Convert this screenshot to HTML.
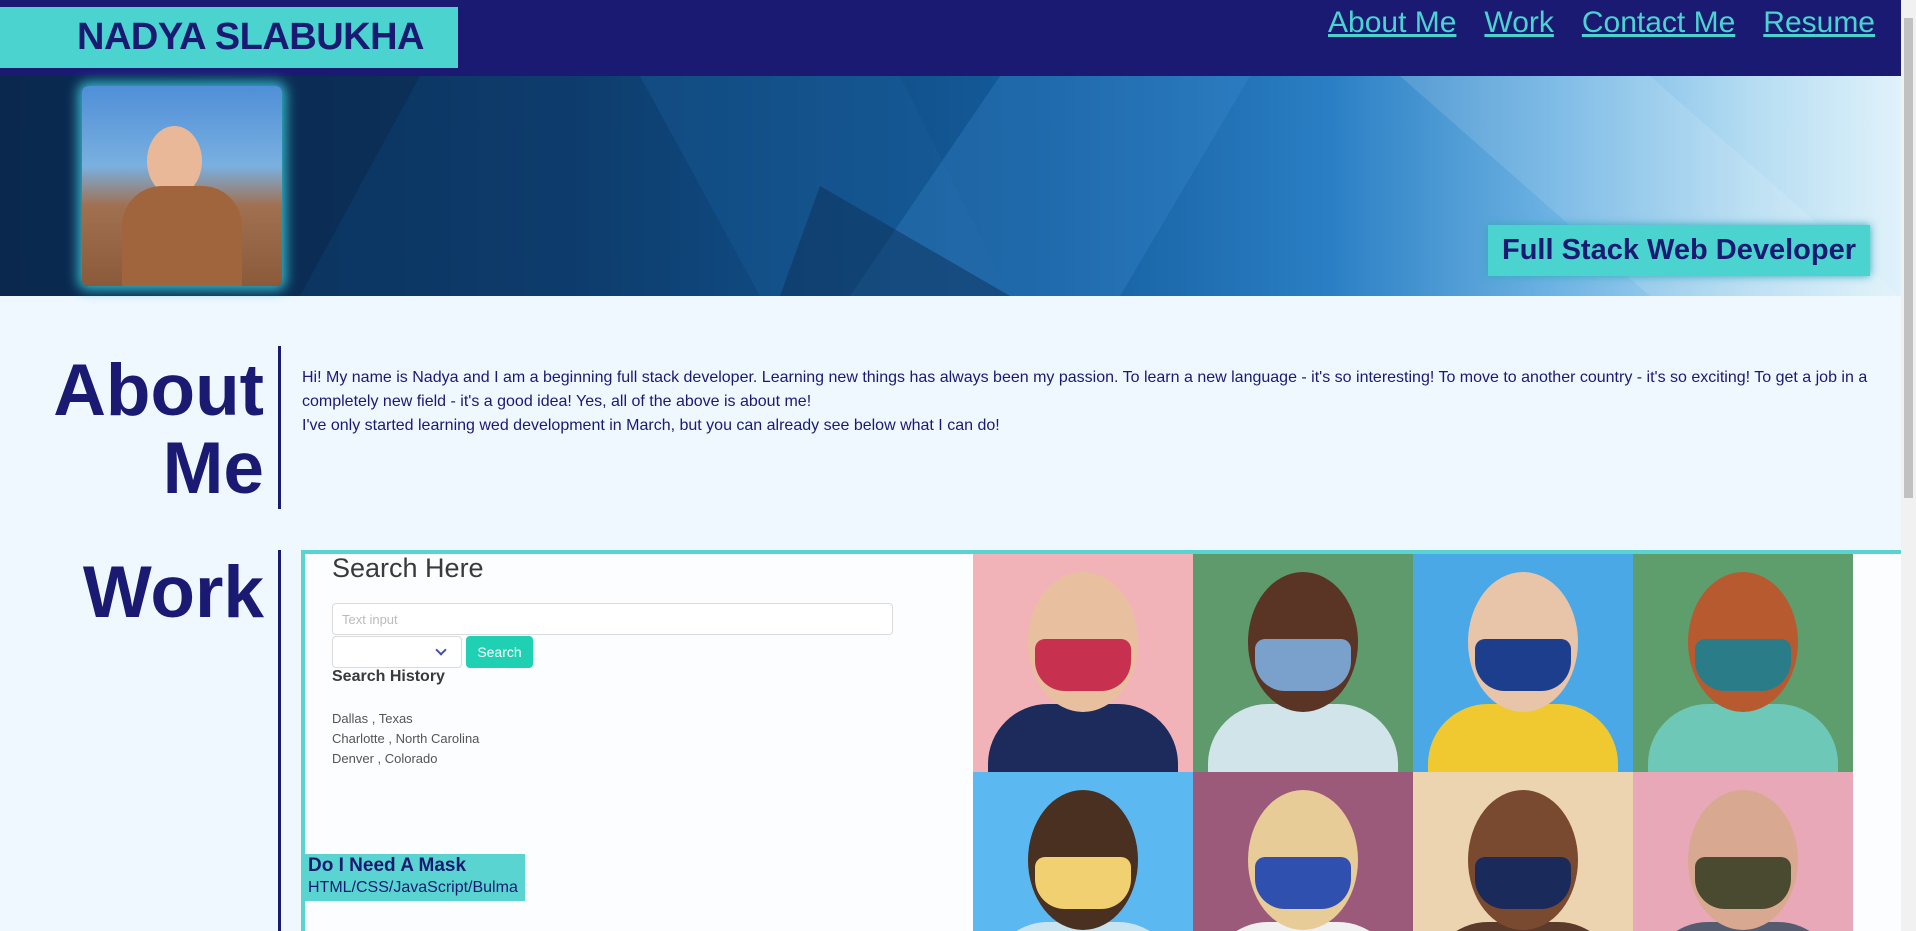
<!DOCTYPE html>
<html><head><meta charset="utf-8"><style>
*{margin:0;padding:0;box-sizing:border-box}
html,body{width:1916px;height:931px;overflow:hidden}
body{background:#eff7ff;font-family:"Liberation Sans",sans-serif;position:relative}
.sb{position:absolute;left:1901px;top:0;width:15px;height:931px;background:#f1f1f1}
.sb:before{content:"";position:absolute;left:3px;top:18px;width:9px;height:480px;background:#c1c1c1}
header{position:absolute;left:0;top:0;width:1901px;height:76px;background:#1b1a73}
.name{position:absolute;left:0;top:7px;width:458px;height:61px;background:#4ad3cf;color:#1b1a73;font-weight:bold;font-size:38px;line-height:61px;padding-left:77px;letter-spacing:-0.5px}
nav{position:absolute;right:26px;top:6px;font-size:30px}
nav a{color:#4ad3cf;text-decoration:underline;margin-left:28px}
.banner{position:absolute;left:0;top:76px;width:1901px;height:220px;overflow:hidden}
.photo{position:absolute;left:82px;top:86px;width:200px;height:200px;border-radius:6px;overflow:hidden;box-shadow:0 0 12px 4px #35b8c8;background:linear-gradient(#4f8fd8 0,#7ab0e0 40%,#a07050 60%,#8a5a3a 100%)}
.fs{position:absolute;left:1488px;top:225px;width:382px;height:51px;background:#4ad3cf;color:#1b1a73;font-weight:bold;font-size:29px;line-height:51px;text-align:center;box-shadow:0 0 8px #3ab}
h2{position:absolute;color:#1b1a73;font-size:73px;font-weight:bold;text-align:right;line-height:78px}
.vl{position:absolute;left:278px;width:3px;background:#1b1a73}
.about p{position:absolute;left:302px;top:366px;width:1570px;font-size:16px;line-height:24px;color:#1b1a73}
.work{position:absolute;left:301px;top:550px;width:1600px;height:381px;border:4px solid #5ad4d0;border-right:none;border-bottom:none;background:#fcfdff}
.sh{position:absolute;left:332px;top:553px;font-size:27px;color:#3a3a3a}
.inp{position:absolute;left:332px;top:603px;width:561px;height:32px;border:1px solid #dbdbdb;border-radius:4px;background:#fff;font-size:13px;color:#bbb;padding:8px 9px}
.sel{position:absolute;left:332px;top:636px;width:130px;height:32px;border:1px solid #dbdbdb;border-radius:4px;background:#fff}
.sel:after{content:"";position:absolute;right:16px;top:9px;width:6px;height:6px;border-right:2px solid #4850a8;border-bottom:2px solid #4850a8;transform:rotate(45deg)}
.btn{position:absolute;left:466px;top:636px;width:67px;height:32px;background:#1fd1b2;color:#fff;border-radius:4px;font-size:14px;text-align:center;line-height:32px}
.hist{position:absolute;left:332px;top:668px;font-size:16px;font-weight:bold;color:#3a3a3a}
.cities{position:absolute;left:332px;top:709px;font-size:13px;line-height:20px;color:#555}
.mask{position:absolute;left:304px;top:854px;width:221px;height:47px;background:#5ad4d0;color:#1b1a73;padding-left:4px}
.mask b{display:block;font-size:19px;line-height:24px}
.mask span{font-size:16px;line-height:20px}
.grid{position:absolute;left:973px;top:554px;width:880px;height:377px;overflow:hidden}
.t{position:absolute;width:220px;height:218px;overflow:hidden}
.t .h{position:absolute;left:55px;top:18px;width:110px;height:140px;border-radius:50%}
.t .m{position:absolute;left:62px;top:85px;width:96px;height:52px;border-radius:10px 10px 30px 30px}
.t .b{position:absolute;left:15px;top:150px;width:190px;height:120px;border-radius:60px 60px 0 0}
</style></head><body>
<header><div class="name">NADYA SLABUKHA</div>
<nav><a>About Me</a><a>Work</a><a>Contact Me</a><a>Resume</a></nav></header>
<div class="banner"><svg width="1901" height="220" viewBox="0 0 1901 220">
<defs><linearGradient id="g" x1="0" x2="1"><stop offset="0" stop-color="#0b2c55"/><stop offset=".3" stop-color="#0d3c6c"/><stop offset=".55" stop-color="#145c9c"/><stop offset=".7" stop-color="#2a7fc4"/><stop offset=".82" stop-color="#6fb4e4"/><stop offset=".92" stop-color="#b4dcf2"/><stop offset="1" stop-color="#e0f2fa"/></linearGradient></defs>
<rect width="1901" height="220" fill="url(#g)"/>
<polygon points="640,0 900,0 1010,220 760,220" fill="#1a5f9a" opacity=".35"/>
<polygon points="1000,0 1250,0 1120,220 850,220" fill="#3a8ad0" opacity=".3"/>
<polygon points="0,0 420,0 300,220 0,220" fill="#0a2444" opacity=".4"/>
<polygon points="1400,0 1650,0 1900,220 1650,220" fill="#ffffff" opacity=".12"/>
<polygon points="820,110 1010,220 780,220" fill="#0b2f58" opacity=".5"/>
</svg></div>
<div class="photo"><div style="position:absolute;left:65px;top:40px;width:55px;height:70px;border-radius:50%;background:#e8b898"></div><div style="position:absolute;left:40px;top:100px;width:120px;height:100px;border-radius:40px 40px 0 0;background:#a0653c"></div></div>
<div class="fs">Full Stack Web Developer</div>
<div class="about"><h2 style="left:40px;top:352px;width:224px">About<br>Me</h2>
<div class="vl" style="top:346px;height:163px"></div>
<p>Hi! My name is Nadya and I am a beginning full stack developer. Learning new things has always been my passion. To learn a new language - it's so interesting! To move to another country - it's so exciting! To get a job in a completely new field - it's a good idea! Yes, all of the above is about me!<br>I've only started learning wed development in March, but you can already see below what I can do!</p></div>
<h2 style="left:40px;top:554px;width:224px">Work</h2>
<div class="vl" style="top:550px;height:381px"></div>
<div class="work"></div>
<div class="sh">Search Here</div>
<div class="inp">Text input</div>
<div class="sel"></div><div class="btn">Search</div>
<div class="hist">Search History</div>
<div class="cities">Dallas , Texas<br>Charlotte , North Carolina<br>Denver , Colorado</div>
<div class="mask"><b>Do I Need A Mask</b><span>HTML/CSS/JavaScript/Bulma</span></div>
<div class="grid">
<div class="t" style="left:0;top:0;background:#f2b3b8"><div class="b" style="background:#1c2a5c"></div><div class="h" style="background:#e8c0a0"></div><div class="m" style="background:#c83050"></div></div>
<div class="t" style="left:220px;top:0;background:#5f9a6c"><div class="b" style="background:#d0e4ea"></div><div class="h" style="background:#5a3424"></div><div class="m" style="background:#7aa0cc"></div></div>
<div class="t" style="left:440px;top:0;background:#4aa8e6"><div class="b" style="background:#f0c830"></div><div class="h" style="background:#e8c4a8"></div><div class="m" style="background:#1c3e8c"></div></div>
<div class="t" style="left:660px;top:0;background:#5e9e6c"><div class="b" style="background:#6ec8b8"></div><div class="h" style="background:#b85a30"></div><div class="m" style="background:#2a7c88"></div></div>
<div class="t" style="left:0;top:218px;background:#5cb8f0"><div class="b" style="background:#c8e4f0"></div><div class="h" style="background:#4a3020"></div><div class="m" style="background:#f0d070"></div></div>
<div class="t" style="left:220px;top:218px;background:#9c5a7a"><div class="b" style="background:#f0f0f0"></div><div class="h" style="background:#e8cc98"></div><div class="m" style="background:#3050b0"></div></div>
<div class="t" style="left:440px;top:218px;background:#ecd4b0"><div class="b" style="background:#5a3a2a"></div><div class="h" style="background:#7a4a30"></div><div class="m" style="background:#1a2a5a"></div></div>
<div class="t" style="left:660px;top:218px;background:#e8a8b8"><div class="b" style="background:#555c70"></div><div class="h" style="background:#d8a890"></div><div class="m" style="background:#4a4a30"></div></div>
</div>
<div class="sb"></div>
</body></html>
